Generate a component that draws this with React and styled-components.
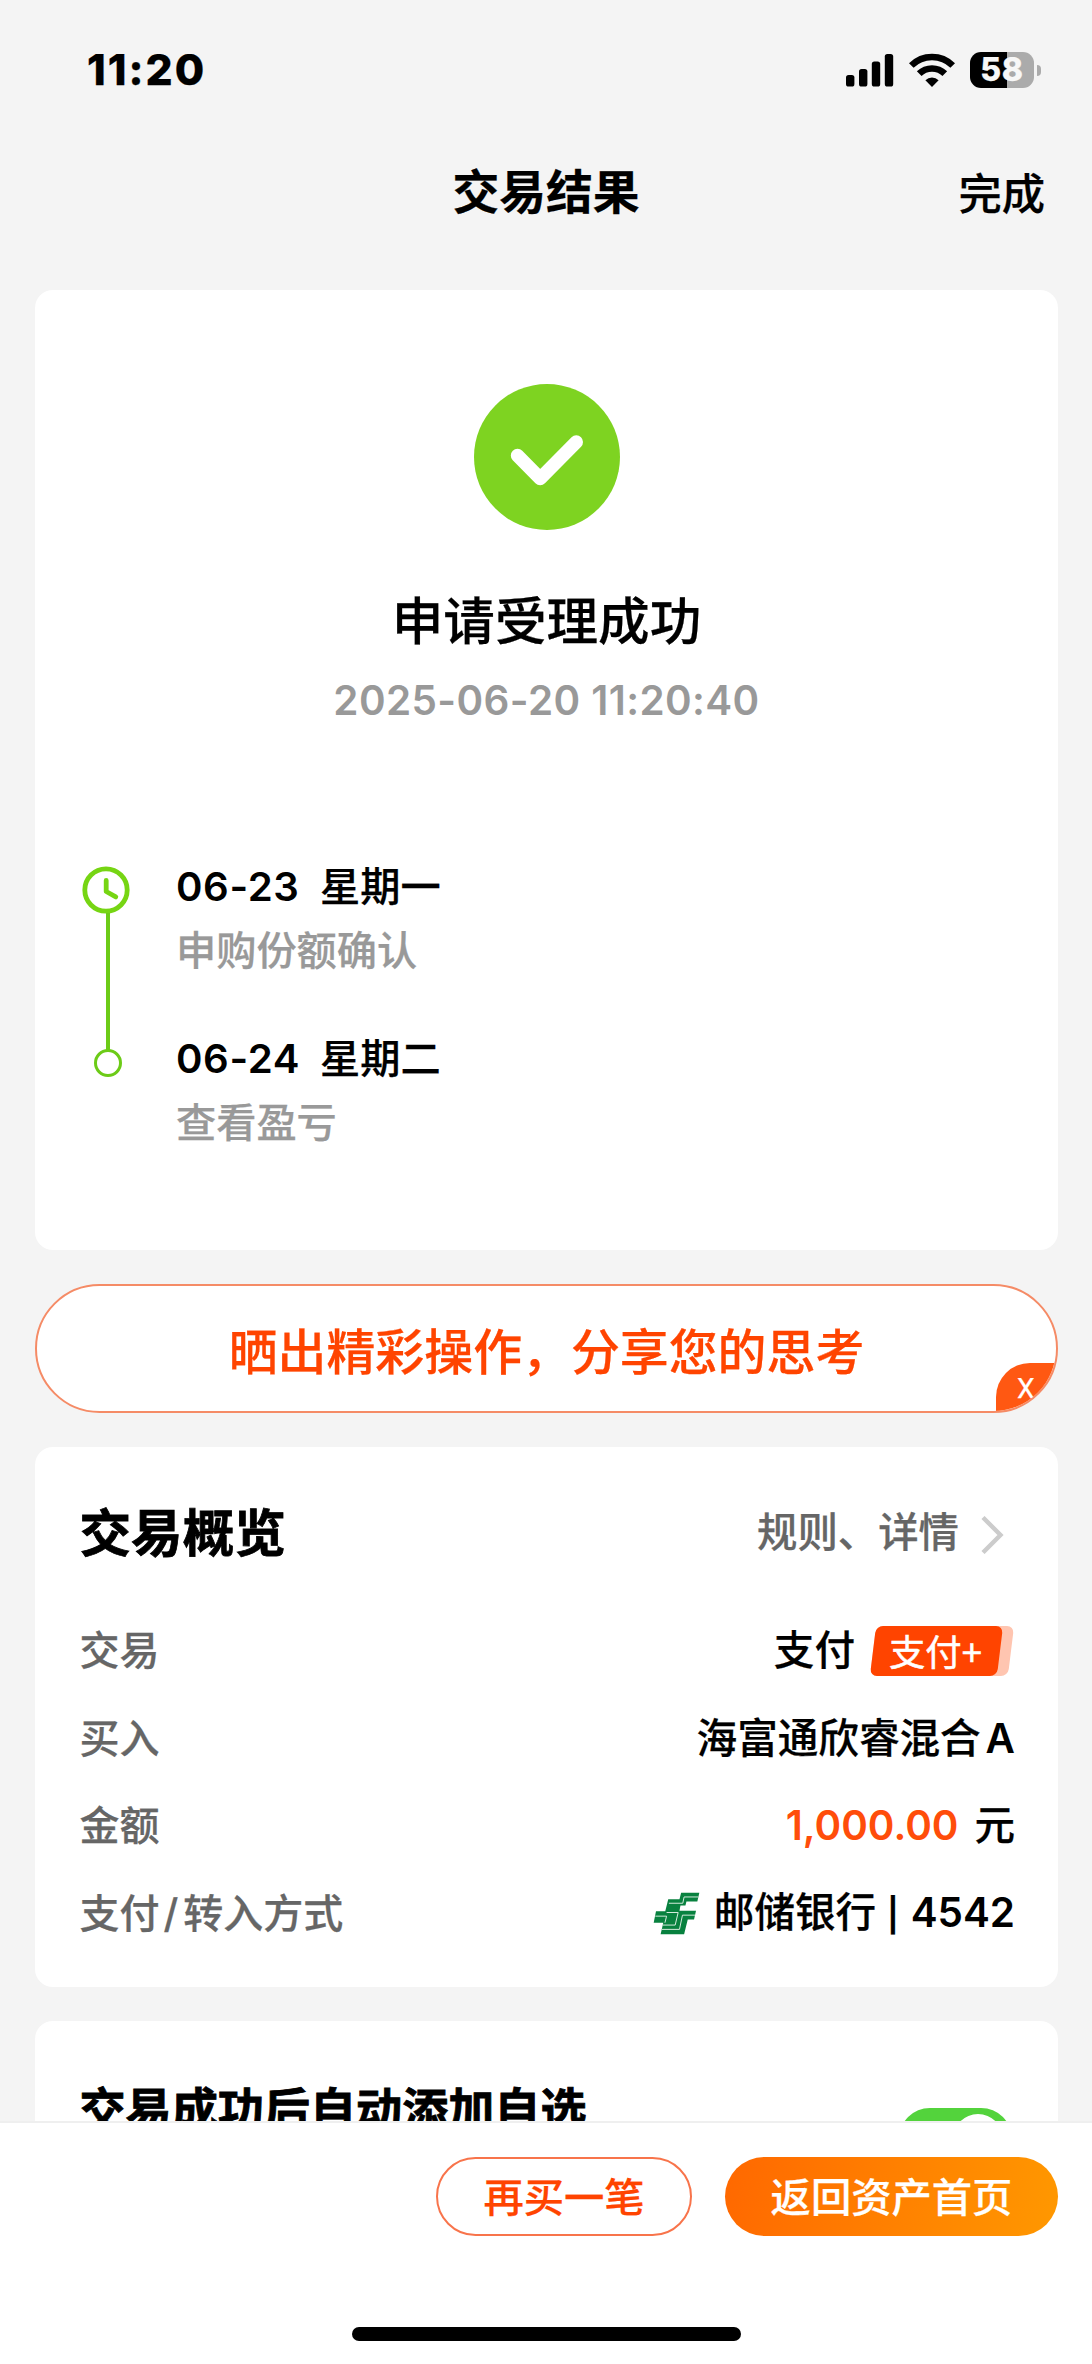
import React from 'react';
import styled, { createGlobalStyle } from 'styled-components';

const GlobalStyle = createGlobalStyle`
  * { box-sizing: border-box; }
  body {
    margin: 0;
    background: #f4f4f4;
    color: #000;
    font-family: Inter, "Noto Sans CJK SC", sans-serif;
    font-weight: 500;
    -webkit-text-stroke: 0.25px currentColor;
  }
`;

const Screen = styled.div`
  display: flex;
  flex-direction: column;
  width: 1092px;
  height: 2364px;
  overflow: hidden;
  background: #f4f4f4;
`;

const StatusBar = styled.header`
  flex: none;
  display: flex;
  justify-content: space-between;
  align-items: center;
  height: 140px;
  padding: 0 51px 0 87px;
`;

const Clock = styled.span`
  font-size: 42.6px;
  font-weight: 800;
  line-height: 50px;
  letter-spacing: 2px;
`;

const StatusIcons = styled.div`
  display: flex;
  align-items: center;
  gap: 15px;
  height: 36px;
  svg { display: block; }
`;

const Battery = styled.div`
  display: flex;
  align-items: center;
  gap: 3px;
`;

const BatteryBody = styled.div`
  display: flex;
  align-items: center;
  justify-content: center;
  width: 64px;
  height: 36px;
  border-radius: 11px;
  background: linear-gradient(to right, #000 ${(p) => p.$level}%, #ababab ${(p) => p.$level}%);
  color: #f7f7f7;
  font-size: 32px;
  font-weight: 800;
  line-height: 36px;
  letter-spacing: 0.8px;
`;

const BatteryTip = styled.div`
  width: 4px;
  height: 11px;
  border-radius: 0 5px 5px 0;
  background: #ababab;
`;

const NavBar = styled.nav`
  flex: none;
  display: grid;
  grid-template-columns: 1fr auto 1fr;
  align-items: center;
  height: 106px;
  margin-bottom: 44px;
  padding: 0 47px;
`;

const NavTitle = styled.h1`
  grid-column: 2;
  margin: 0;
  padding-bottom: 2px;
  font-size: 46.8px;
  font-weight: 700;
  line-height: 60px;
`;

const NavAction = styled.span`
  justify-self: end;
  padding-top: 1px;
  font-size: 43.3px;
  line-height: 60px;
`;

const Content = styled.main`
  flex: 1;
  min-height: 0;
  overflow: hidden;
  display: flex;
  flex-direction: column;
  gap: 34px;
  padding: 0 34px 0 35px;
`;

const Card = styled.section`
  flex: none;
  padding: ${(p) => p.$padding};
  border-radius: 18px;
  background: #fff;
`;

const Result = styled.div`
  display: flex;
  flex-direction: column;
  align-items: center;
  svg { display: block; }
`;

const ResultTitle = styled.h2`
  margin: 56px 0 0;
  font-size: 51.6px;
  font-weight: 500;
  line-height: 70px;
`;

const ResultTime = styled.time`
  margin-top: 20px;
  color: #999;
  font-size: 40.4px;
  line-height: 50px;
  letter-spacing: 0.4px;
  font-weight: 600;
  -webkit-text-stroke-width: 0;
`;

const Timeline = styled.div`
  display: flex;
  gap: 46px;
  margin-top: 136px;
`;

const Rail = styled.div`
  display: flex;
  flex-direction: column;
  align-items: center;
  width: 48px;
  padding-top: 4px;
  svg { display: block; }
`;

const RailLine = styled.div`
  width: 4px;
  height: 137px;
  margin: -1px 0 -1px 4px;
  background: #6ccb17;
`;

const RailDot = styled.div`
  width: 28px;
  height: 28px;
  margin-left: 4px;
  border: 3px solid #6ccb17;
  border-radius: 50%;
`;

const Steps = styled.div`
  display: flex;
  flex-direction: column;
  gap: 58px;
`;

const Step = styled.div`
  display: flex;
  flex-direction: column;
  gap: 14px;
  font-size: 40.2px;
  line-height: 50px;
`;

const StepDate = styled.div`
  display: flex;
`;

const StepDay = styled.span`
  width: 144px;
  font-weight: 600;
  letter-spacing: 0.6px;
  -webkit-text-stroke-width: 0;
`;

const StepNote = styled.div`
  color: #999;
`;

const Share = styled.div`
  flex: none;
  position: relative;
  overflow: hidden;
  display: flex;
  align-items: center;
  justify-content: center;
  height: 129px;
  border: 2px solid #f58b66;
  border-radius: 65px;
  background: #fff;
  color: #ff4400;
  font-size: 48.9px;
`;

const ShareClose = styled.span`
  position: absolute;
  right: -2px;
  bottom: -2px;
  display: flex;
  align-items: flex-start;
  width: 62px;
  height: 50px;
  padding: 12px 0 0 21px;
  border-radius: 34px 0 0 0;
  background: #ff5812;
  color: #fff;
  font-family: Roboto, sans-serif;
  font-size: 28px;
  font-weight: 400;
  line-height: 28px;
`;

const CardHead = styled.div`
  display: flex;
  align-items: center;
  justify-content: space-between;
  height: 70px;
`;

const CardTitle = styled.h2`
  margin: 0;
  font-size: ${(p) => p.$size}px;
  font-weight: 700;
  line-height: 70px;
  -webkit-text-stroke-width: 0.8px;
`;

const MoreLink = styled.span`
  display: flex;
  align-items: center;
  gap: 22px;
  padding-right: 11px;
  color: #666;
  font-size: 40.4px;
  line-height: 60px;
  svg { display: block; margin-top: 4px; }
`;

const Rows = styled.dl`
  margin: 39px 0 0;
`;

const Row = styled.div`
  display: flex;
  align-items: center;
  justify-content: space-between;
  height: 87.7px;
  font-size: 40.6px;
  line-height: 60px;
`;

const RowLabel = styled.dt`
  color: #666;
  font-size: 40px;
`;

const Slash = styled.span`
  padding: 0 5px 0 4px;
`;

const RowValue = styled.dd`
  display: flex;
  align-items: center;
  gap: ${(p) => p.$gap || 0}px;
  margin: 0;
`;

const Latin = styled.span`
  font-size: 40.4px;
  font-weight: 600;
  -webkit-text-stroke-width: 0;
`;

const Amount = styled(Latin)`
  color: #ff4d0a;
`;

const Divider = styled.span`
  padding: 0 1px 0 0;
  font-size: 33px;
  font-weight: 600;
`;

const BadgeShadow = styled.span`
  display: flex;
  width: 138px;
  height: 50px;
  margin-right: 4px;
  border-radius: 7px;
  background: #ffc5b0;
  transform: skewX(-7deg);
`;

const Badge = styled.span`
  display: flex;
  align-items: center;
  justify-content: center;
  width: 127px;
  height: 50px;
  border-radius: 7px;
  background: #ff4400;
`;

const BadgeText = styled.span`
  color: #fff;
  font-family: "Noto Sans CJK SC", sans-serif;
  font-size: 36.4px;
  font-weight: 400;
  line-height: 46px;
  padding: 0 2px 3px 0;
  transform: skewX(7deg);
  -webkit-text-stroke-width: 0.5px;
`;

const Switch = styled.span`
  display: flex;
  align-items: center;
  justify-content: flex-end;
  width: 113px;
  height: 62px;
  margin: 59px 2px 0 0;
  padding-right: 9px;
  border-radius: 31px;
  background: #53d33c;
`;

const SwitchKnob = styled.span`
  width: 50px;
  height: 50px;
  border-radius: 50%;
  background: #fff;
`;

const Footer = styled.footer`
  flex: none;
  display: flex;
  flex-direction: column;
  align-items: center;
  justify-content: space-between;
  height: 243px;
  padding: 34px 0 23px;
  border-top: 2px solid #efefef;
  background: #fff;
`;

const Actions = styled.div`
  display: flex;
  align-self: flex-end;
  gap: 33px;
  padding-right: 34px;
`;

const Button = styled.button`
  width: ${(p) => p.$width}px;
  height: 79px;
  padding: 2px 0 0;
  border: ${(p) => (p.$primary ? '0' : '2px solid #f8744b')};
  border-radius: 40px;
  background: ${(p) => (p.$primary ? 'linear-gradient(100deg, #ff6800, #ff9800)' : '#fff')};
  color: ${(p) => (p.$primary ? '#fff' : '#ff4400')};
  font-family: inherit;
  font-size: 40.3px;
  font-weight: 500;
  line-height: 60px;
  -webkit-text-stroke: 0.25px currentColor;
`;

const HomeIndicator = styled.div`
  width: 389px;
  height: 14px;
  border-radius: 7px;
  background: #000;
`;

const SignalIcon = () => (
  <svg width="48" height="34" viewBox="0 0 48 34">
    <rect x="0" y="22" width="8.4" height="11.5" rx="2.6" />
    <rect x="13" y="16" width="8.4" height="17.5" rx="2.6" />
    <rect x="25.8" y="8.5" width="8.4" height="25" rx="2.6" />
    <rect x="38.8" y="1" width="8.4" height="32.5" rx="2.6" />
  </svg>
);

const WifiIcon = () => (
  <svg width="46" height="34" viewBox="0 0 46 34">
    <g fill="none" stroke="#000" strokeWidth="6.6">
      <path d="M2.3 12.5a29.5 29.5 0 0 1 41.4 0" />
      <path d="M10.2 20.7a18.2 18.2 0 0 1 25.6 0" />
    </g>
    <path d="M23 34l-6.6-6.7a9.4 9.4 0 0 1 13.2 0z" />
  </svg>
);

const SuccessIcon = () => (
  <svg width="146" height="146" viewBox="0 0 146 146">
    <circle cx="73" cy="73" r="73" fill="#7ed321" />
    <path d="M43.5 71.5L66.2 94.5L102.3 58" fill="none" stroke="#fff" strokeWidth="13.4" strokeLinecap="round" strokeLinejoin="round" />
  </svg>
);

const ClockIcon = () => (
  <svg width="48" height="48" viewBox="0 0 48 48" fill="none" stroke="#76d513" strokeWidth="4.8">
    <circle cx="24" cy="24" r="21.2" />
    <path d="M24.2 14.5v11l9.6 5.4" strokeLinecap="round" strokeLinejoin="round" />
  </svg>
);

const ChevronIcon = () => (
  <svg width="23" height="38" viewBox="0 0 23 38">
    <path d="M2 1.5L19.5 19L2 36.5" fill="none" stroke="#ccc" strokeWidth="4.4" />
  </svg>
);

const PostBankIcon = () => (
  <svg width="47" height="43" viewBox="25 18 142 130">
    <path fill="#08813f" d="M110 20H165L159 47H126L123 59H108L105 75H155L149 101H130L119 146H48L56 111H27L34 76H62L71 40H105Z" />
    <g fill="none" stroke="#d5ebdd" strokeWidth="3">
      <path d="M162 33H119L115 52H73" />
      <path d="M32 91H66L61 111" />
      <path d="M66 80H101L92 118H54" />
      <path d="M152 88H114L105 131H52" />
    </g>
  </svg>
);

const STEPS = [
  { date: '06-23', day: '星期一', note: '申购份额确认' },
  { date: '06-24', day: '星期二', note: '查看盈亏' },
];

export default function App() {
  return (
    <Screen>
      <GlobalStyle />
      <StatusBar>
        <Clock>11:20</Clock>
        <StatusIcons>
          <SignalIcon />
          <WifiIcon />
          <Battery>
            <BatteryBody $level={58}>58</BatteryBody>
            <BatteryTip />
          </Battery>
        </StatusIcons>
      </StatusBar>
      <NavBar>
        <NavTitle>交易结果</NavTitle>
        <NavAction>完成</NavAction>
      </NavBar>
      <Content>
        <Card $padding="94px 47px 102px">
          <Result>
            <SuccessIcon />
            <ResultTitle>申请受理成功</ResultTitle>
            <ResultTime>2025-06-20 11:20:40</ResultTime>
          </Result>
          <Timeline>
            <Rail>
              <ClockIcon />
              <RailLine />
              <RailDot />
            </Rail>
            <Steps>
              {STEPS.map((s) => (
                <Step key={s.date}>
                  <StepDate>
                    <StepDay>{s.date}</StepDay>
                    <span>{s.day}</span>
                  </StepDate>
                  <StepNote>{s.note}</StepNote>
                </Step>
              ))}
            </Steps>
          </Timeline>
        </Card>
        <Share>
          晒出精彩操作，分享您的思考
          <ShareClose>X</ShareClose>
        </Share>
        <Card $padding="51px 43px 29px 44.5px">
          <CardHead>
            <CardTitle $size={51.6}>交易概览</CardTitle>
            <MoreLink>
              规则、详情
              <ChevronIcon />
            </MoreLink>
          </CardHead>
          <Rows>
            <Row>
              <RowLabel>交易</RowLabel>
              <RowValue $gap={18}>
                <span>支付</span>
                <BadgeShadow>
                  <Badge>
                    <BadgeText>支付+</BadgeText>
                  </Badge>
                </BadgeShadow>
              </RowValue>
            </Row>
            <Row>
              <RowLabel>买入</RowLabel>
              <RowValue $gap={5}>
                <span>海富通欣睿混合</span>
                <Latin>A</Latin>
              </RowValue>
            </Row>
            <Row>
              <RowLabel>金额</RowLabel>
              <RowValue $gap={16}>
                <Amount>1,000.00</Amount>
                <span>元</span>
              </RowValue>
            </Row>
            <Row>
              <RowLabel>
                支付<Slash>/</Slash>转入方式
              </RowLabel>
              <RowValue $gap={14}>
                <PostBankIcon />
                <span>
                  邮储银行 <Divider>|</Divider> <Latin>4542</Latin>
                </span>
              </RowValue>
            </Row>
          </Rows>
        </Card>
        <Card $padding="54px 44.5px">
          <CardHead>
            <CardTitle $size={46.1}>交易成功后自动添加自选</CardTitle>
            <Switch>
              <SwitchKnob />
            </Switch>
          </CardHead>
        </Card>
      </Content>
      <Footer>
        <Actions>
          <Button $width={256}>再买一笔</Button>
          <Button $width={333} $primary>返回资产首页</Button>
        </Actions>
        <HomeIndicator />
      </Footer>
    </Screen>
  );
}
